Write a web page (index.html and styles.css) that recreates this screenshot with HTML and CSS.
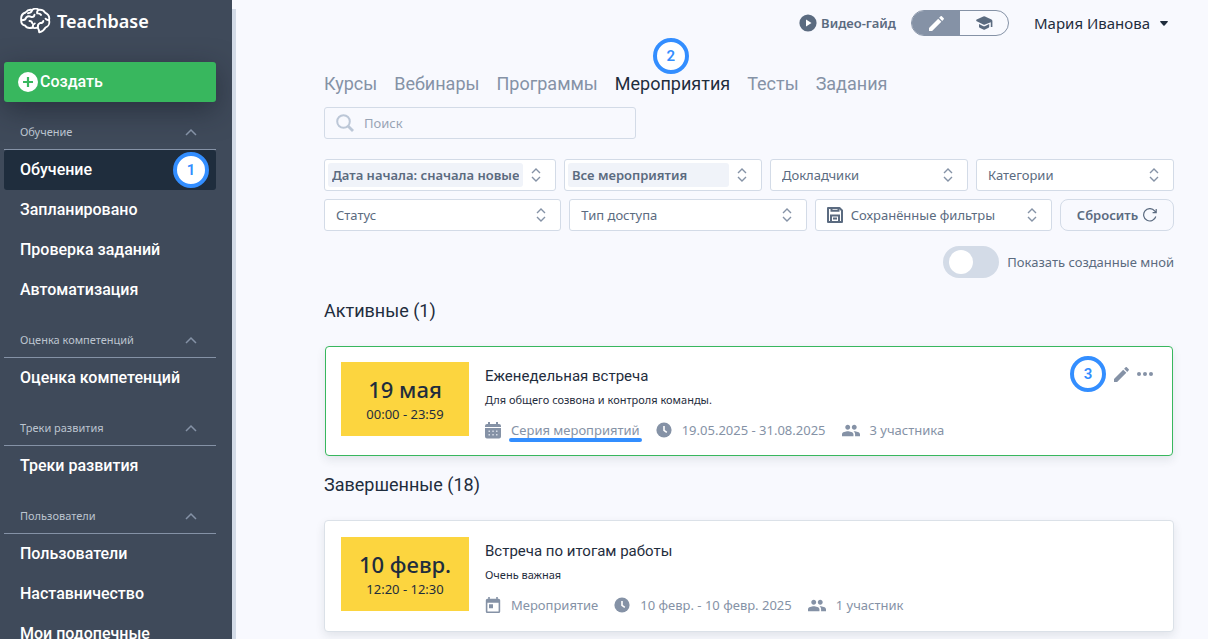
FILE: index.html
```html
<!DOCTYPE html>
<html lang="ru">
<head>
  <meta charset="UTF-8" />
  <meta name="viewport" content="width=device-width, initial-scale=1.0" />
  <title>Teachbase</title>
  <link rel="stylesheet" href="styles.css">
</head>
<body>
  <svg class="sprite" aria-hidden="true">
    <symbol id="i-up" viewBox="0 0 12 8"><path d="M1 7l5-5 5 5" fill="none" stroke="currentColor" stroke-width="1.5"/></symbol>
    <symbol id="i-sort" viewBox="0 0 10 14"><path d="M1 5l4-4 4 4M1 9l4 4 4-4" fill="none" stroke="currentColor" stroke-width="1.4"/></symbol>
    <symbol id="i-edit" viewBox="3 3 18 18"><path d="M3 17.25V21h3.75L17.81 9.94l-3.75-3.75L3 17.25zM20.71 7.04c.39-.39.39-1.02 0-1.41l-2.34-2.34c-.39-.39-1.02-.39-1.41 0l-1.83 1.83 3.75 3.75 1.83-1.83z"/></symbol>
    <symbol id="i-people" viewBox="1 3 22 18"><path d="M16 11c1.66 0 2.99-1.34 2.99-3S17.66 5 16 5c-1.66 0-3 1.34-3 3s1.34 3 3 3zm-8 0c1.66 0 2.99-1.34 2.99-3S9.66 5 8 5C6.34 5 5 6.34 5 8s1.34 3 3 3zm0 2c-2.33 0-7 1.17-7 3.5V19h14v-2.5c0-2.33-4.67-3.5-7-3.5zm8 0c-.29 0-.62.02-.97.05 1.16.84 1.97 1.97 1.97 3.45V19h6v-2.5c0-2.33-4.67-3.5-7-3.5z"/></symbol>
    <symbol id="i-clock" viewBox="0 0 16 16"><circle cx="8" cy="8" r="7.6"/><path d="M8 4v4.3l2.8 2" fill="none" stroke="#fff" stroke-width="1.6"/></symbol>
    <symbol id="i-today" viewBox="2 1 20 21"><path d="M19 3h-1V1h-2v2H8V1H6v2H5c-1.11 0-1.99.9-1.99 2L3 19c0 1.1.89 2 2 2h14c1.1 0 2-.9 2-2V5c0-1.1-.9-2-2-2zm0 16H5V8h14v11zM7 10h5v5H7z"/></symbol>
    <symbol id="i-series" viewBox="0 0 16 17"><path d="M0 5V4a2 2 0 0 1 2-2h1V0h2v2h6V0h2v2h1a2 2 0 0 1 2 2v1zM0 6h16v8.500a2 2 0 0 1-2 2H2a2 2 0 0 1-2-2z"/><path d="M3.500 8.500H5V10H3.500zM7.300 8.500h1.500V10H7.300zM11 8.500h1.500V10H11zM3.500 12H5v1.500H3.500zM7.300 12h1.500v1.500H7.300zM11 12h1.500v1.500H11z" fill="#d5dbe5"/></symbol>
  </svg>

  <aside class="sidebar">
    <a class="logo" href="#">
      <svg class="line" width="31" height="26" viewBox="0 0 31 26" stroke-width="1.9" stroke-linecap="round" stroke-linejoin="round">
        <path d="M5 17.500C2 17 1 14.500 1.200 12 .8 8.500 2.500 5.500 5.500 4.500 7.500 2 10 1.300 12 2c2-1.500 5-1.500 6.800-.2 3-.3 5.400 1 6.200 2.900 3.200 1.500 4.800 4.300 4 7.300 1 3.500-.6 6.500-3.600 7.600-1.200 2.600-3.400 4-6.200 4.700-.1-1.800-.5-3.300-1.500-4.900-2 .9-3.800.9-5 .1-3 .9-6.300.3-7.700-2z"/>
        <path d="M12 2.500c-.6 1.800-2 2.600-4 2.700M18.500 2c-1.300.8-1.700 2-1.300 3.400 1.800-.2 3 .3 3.800 1.500M1.800 12.300c2.500 0 4-1 4.400-2.800 1.400-1.300 3.200-1.500 5-.6M11.500 9c1.800.2 2.800-.8 3-2.400M13 19.300c-.6-1.800.1-3 1.800-3.800M9.500 13c1.500 0 2.500.8 2.800 2.200M28.500 12c-1.200.2-2.200-.3-3-1.300M18 19c-.4-1.800.3-3.200 2-4 1.700.2 3-.5 3.300-2"/>
      </svg>
      <span>Teachbase</span>
    </a>
    <button class="create" type="button">
      <svg width="20" height="20" viewBox="0 0 20 20"><circle cx="10" cy="10" r="10" fill="#fff"/><path d="M10 5v10M5 10h10" stroke="#38b75e" stroke-width="2.200"/></svg>
      Создать
    </button>
    <nav>
      <div class="nav-head">Обучение <svg class="up"><use href="#i-up"/></svg></div>
      <a class="nav-item active" href="#">Обучение <span class="mark mark-nav">1</span></a>
      <a class="nav-item" href="#">Запланировано</a>
      <a class="nav-item" href="#">Проверка заданий</a>
      <a class="nav-item" href="#">Автоматизация</a>
      <div class="nav-head">Оценка компетенций <svg class="up"><use href="#i-up"/></svg></div>
      <a class="nav-item" href="#">Оценка компетенций</a>
      <div class="nav-head">Треки развития <svg class="up"><use href="#i-up"/></svg></div>
      <a class="nav-item" href="#">Треки развития</a>
      <div class="nav-head">Пользователи <svg class="up"><use href="#i-up"/></svg></div>
      <a class="nav-item" href="#">Пользователи</a>
      <a class="nav-item" href="#">Наставничество</a>
      <a class="nav-item" href="#">Мои подопечные</a>
    </nav>
  </aside>
  <div class="scroll-line"></div>

  <main class="main">
    <header class="topbar">
      <a class="guide" href="#">
        <svg width="18" height="18" viewBox="0 0 18 18"><circle cx="9" cy="9" r="8.600"/><path d="M7 5.500v7l5.500-3.500z" fill="#fff"/></svg>
        Видео-гайд
      </a>
      <div class="mode">
        <button class="mode-btn on" type="button" aria-label="Редактор"><svg width="15" height="15"><use href="#i-edit"/></svg></button>
        <button class="mode-btn" type="button" aria-label="Ученик"><svg width="17" height="14" viewBox="0 0 17 14"><path d="M7.300.4a2 2 0 0 1 1.700 0l6.500 3.200q1 .6.900 1.600V11h-1.600V6.200L9 8.500a2 2 0 0 1-1.700 0L.7 5.200a.9.900 0 0 1 0-1.600zM3 8l4.500 2.200h1.300L13.200 8v2.800q0 .7-.6 1L9 13.600a2 2 0 0 1-1.700 0l-3.700-1.800q-.6-.3-.6-1z"/></svg></button>
      </div>
      <button class="user" type="button">Мария Иванова <svg width="8" height="5" viewBox="0 0 8 5"><path d="M.5 0h7q.6.300.2.900L4.600 4.600q-.6.500-1.200 0L.3.900Q0 .2.500 0z"/></svg></button>
    </header>

    <nav class="tabs">
      <a href="#">Курсы</a>
      <a href="#">Вебинары</a>
      <a href="#">Программы</a>
      <a class="current" href="#">Мероприятия<span class="mark mark-tab">2</span></a>
      <a href="#">Тесты</a>
      <a href="#">Задания</a>
    </nav>

    <label class="search">
      <svg class="line" width="18" height="18" viewBox="0 0 18 18" stroke-width="2"><circle cx="7.500" cy="7.500" r="6.300"/><path d="M12 12l5 5" stroke-width="2.800"/></svg>
      <input type="text" placeholder="Поиск" aria-label="Поиск" />
    </label>

    <div class="filters">
      <div class="filter-row first">
        <label class="filter filled"><select aria-label="Сортировка"><option>Дата начала: сначала новые</option></select><svg class="arrows"><use href="#i-sort"/></svg></label>
        <label class="filter filled"><select aria-label="Мероприятия"><option>Все мероприятия</option></select><svg class="arrows"><use href="#i-sort"/></svg></label>
        <label class="filter"><select aria-label="Докладчики"><option>Докладчики</option></select><svg class="arrows"><use href="#i-sort"/></svg></label>
        <label class="filter"><select aria-label="Категории"><option>Категории</option></select><svg class="arrows"><use href="#i-sort"/></svg></label>
      </div>
      <div class="filter-row">
        <label class="filter"><select aria-label="Статус"><option>Статус</option></select><svg class="arrows"><use href="#i-sort"/></svg></label>
        <label class="filter"><select aria-label="Тип доступа"><option>Тип доступа</option></select><svg class="arrows"><use href="#i-sort"/></svg></label>
        <label class="filter">
          <svg class="line" width="16" height="16" viewBox="0 0 16 16" stroke-width="2"><path d="M1 1h11.500L15 3.500V15H1z" stroke-linejoin="round"/><path d="M4.500 1v2.800h7V1M4 15V8.500h8V15M6 11.500h4"/></svg>
          <select aria-label="Сохранённые фильтры"><option>Сохранённые фильтры</option></select><svg class="arrows"><use href="#i-sort"/></svg>
        </label>
        <button class="reset" type="button">Сбросить <svg class="line" width="14" height="14" viewBox="0 0 14 14" stroke-width="1.200"><path d="M12.800 8.500A6.200 6.200 0 1 1 11.600 2.800l1.300 1.500M13.200 1v3.600H9.600"/></svg></button>
      </div>
    </div>

    <label class="mine"><input type="checkbox" /> Показать созданные мной</label>

    <h2>Активные (1)</h2>
    <article class="card live">
      <div class="date"><b>19 мая</b><span>00:00 - 23:59</span></div>
      <div class="info">
        <h3>Еженедельная встреча</h3>
        <p>Для общего созвона и контроля команды.</p>
        <div class="meta">
          <svg width="16" height="17"><use href="#i-series"/></svg><span class="series">Серия мероприятий</span>
          <svg width="16" height="16"><use href="#i-clock"/></svg><span>19.05.2025 - 31.08.2025</span>
          <svg width="18" height="15"><use href="#i-people"/></svg><span>3 участника</span>
        </div>
      </div>
      <div class="actions">
        <span class="mark">3</span>
        <button type="button" aria-label="Изменить"><svg width="15" height="15"><use href="#i-edit"/></svg></button>
        <button type="button" aria-label="Ещё"><svg width="16" height="4" viewBox="0 0 16 4"><circle cx="2" cy="2" r="2"/><circle cx="8" cy="2" r="2"/><circle cx="14" cy="2" r="2"/></svg></button>
      </div>
    </article>

    <h2>Завершенные (18)</h2>
    <article class="card">
      <div class="date"><b>10 февр.</b><span>12:20 - 12:30</span></div>
      <div class="info">
        <h3>Встреча по итогам работы</h3>
        <p>Очень важная</p>
        <div class="meta">
          <svg width="16" height="17"><use href="#i-today"/></svg><span>Мероприятие</span>
          <svg width="16" height="16"><use href="#i-clock"/></svg><span>10 февр. - 10 февр. 2025</span>
          <svg width="18" height="15"><use href="#i-people"/></svg><span>1 участник</span>
        </div>
      </div>
    </article>
  </main>
</body>
</html>
```
FILE: styles.css
```css
* {
  box-sizing: border-box;
}

body {
  margin: 0;
  height: 100vh;
  display: flex;
  overflow: hidden;
  background: #f8f9fe;
  color: #1f2d3d;
  font-family: "Noto Sans", "Open Sans", sans-serif;
  font-size: 13px;
  line-height: 20px;
}

a {
  color: inherit;
  text-decoration: none;
}

button,
select,
input {
  font: inherit;
  color: inherit;
}

button {
  padding: 0;
  border: 0;
  background: none;
  cursor: pointer;
}

svg {
  flex: none;
  fill: currentColor;
}

svg.line {
  fill: none;
  stroke: currentColor;
}

.sprite {
  position: absolute;
  width: 0;
  height: 0;
}

/* Sidebar */
.sidebar {
  flex: none;
  width: 232px;
  padding: 8px 16px 0 4px;
  overflow: hidden;
  background: #3f4a5a;
  color: #fff;
}

.scroll-line {
  flex: none;
  width: 4px;
  margin-top: 9px;
  background: #d3dbe7;
}

.logo {
  display: flex;
  align-items: center;
  gap: 6px;
  height: 26px;
  padding-left: 16px;
  font-size: 18px;
  font-weight: 600;
}

.create {
  display: flex;
  align-items: center;
  gap: 2px;
  width: 100%;
  height: 40px;
  margin-top: 28px;
  padding-left: 14px;
  border-radius: 3px;
  background: #38b75e;
  box-shadow: 0 8px 28px rgba(20, 26, 36, 0.5);
  font-family: Roboto, sans-serif;
  font-size: 16px;
  font-weight: 500;
}

.nav-head {
  display: flex;
  align-items: center;
  justify-content: space-between;
  height: 48px;
  padding: 12px 19px 0 16px;
  border-bottom: 1px solid #8592a6;
  color: #bcc4cf;
  font-size: 11px;
}

.up {
  width: 12px;
  height: 8px;
  color: #8592a6;
}

.nav-item {
  position: relative;
  display: flex;
  align-items: center;
  height: 40px;
  padding: 0 7px 0 16px;
  border-radius: 3px;
  font-family: Roboto, sans-serif;
  font-size: 16px;
  font-weight: 500;
}

.nav-item.active {
  background: #1f2d3d;
}

/* Numbered marks */
.mark {
  display: flex;
  align-items: center;
  justify-content: center;
  width: 36px;
  height: 36px;
  border: 4px solid #338eff;
  border-radius: 50%;
  background: #fff;
  color: #338eff;
  font-family: Roboto, sans-serif;
  font-size: 15px;
  font-weight: 600;
}

.mark-nav {
  position: absolute;
  top: 2px;
  right: 7px;
}

.mark-tab {
  position: absolute;
  left: 38px;
  bottom: 22px;
}

/* Top bar */
.main {
  flex: 1;
  min-width: 0;
  padding: 10px 34px 0 88px;
}

.topbar {
  display: flex;
  align-items: center;
  justify-content: flex-end;
  height: 26px;
  padding-right: 6px;
}

.guide {
  display: flex;
  align-items: center;
  gap: 4px;
  margin-right: 15px;
  color: #5b6b80;
  font-weight: 600;
}

.mode {
  display: flex;
  width: 98px;
  height: 26px;
  margin-right: 25px;
  overflow: hidden;
  border: 1px solid #8592a6;
  border-radius: 13px;
}

.mode-btn {
  flex: 1;
  display: flex;
  align-items: center;
  justify-content: center;
  color: #5b6b80;
}

.mode-btn.on {
  background: #8592a6;
  color: #fff;
}

.user {
  display: flex;
  align-items: center;
  gap: 10px;
  font-size: 15px;
}

/* Tabs */
.tabs {
  display: flex;
  gap: 17px;
  margin-top: 36px;
  color: #8592a6;
  font-family: Roboto, sans-serif;
  font-size: 18px;
  line-height: 24px;
}

.tabs a {
  position: relative;
}

.tabs .current {
  color: #1f2d3d;
}

/* Search and filters */
.search {
  display: flex;
  align-items: center;
  gap: 10px;
  width: 312px;
  height: 32px;
  margin-top: 11px;
  padding: 0 11px;
  border: 1px solid #d3dbe7;
  border-radius: 3px;
  color: #bcc7d7;
}

.search input {
  flex: 1;
  min-width: 0;
  padding: 0;
  border: 0;
  outline: none;
  background: none;
  color: #1f2d3d;
}

.search input::placeholder {
  color: #98a4b5;
}

.filters {
  display: flex;
  flex-direction: column;
  gap: 8px;
  margin-top: 20px;
  color: #5b6b80;
}

.filter-row {
  display: flex;
  gap: 8px;
}

.filter-row.first {
  display: grid;
  grid-template-columns: 232px repeat(3, 1fr);
}

.filter {
  flex: 1;
  display: flex;
  align-items: center;
  gap: 8px;
  min-width: 0;
  height: 32px;
  padding: 3px 14px 3px 11px;
  border: 1px solid #d3dbe7;
  border-radius: 3px;
  background: #fff;
}

.filter select {
  flex: 1;
  min-width: 0;
  height: 24px;
  padding: 0;
  border: 0;
  border-radius: 3px;
  outline: none;
  appearance: none;
  background: none;
}

.filter.filled {
  padding-left: 3px;
}

.filled select {
  padding: 0 4px;
  background: #f0f3f9;
  font-weight: 600;
}

.arrows {
  width: 10px;
  height: 14px;
  color: #8592a6;
}

.reset {
  display: flex;
  align-items: center;
  justify-content: center;
  gap: 5px;
  width: 114px;
  height: 32px;
  border: 1px solid #d3dbe7;
  border-radius: 8px;
  font-weight: 600;
}

.mine {
  display: flex;
  align-items: center;
  justify-content: flex-end;
  gap: 8px;
  margin: 15px 0 20px;
  color: #5b6b80;
}

.mine input {
  display: flex;
  align-items: center;
  width: 56px;
  height: 32px;
  margin: 0;
  padding: 0 6px;
  border-radius: 16px;
  appearance: none;
  background: #d3dbe7;
}

.mine input::before {
  content: "";
  width: 24px;
  height: 24px;
  border-radius: 50%;
  background: #fff;
}

.mine input:checked {
  justify-content: flex-end;
  background: #38b75e;
}

/* Event cards */
h2 {
  margin: 16px 0 22px;
  font-family: Roboto, sans-serif;
  font-size: 18px;
  font-weight: 400;
  line-height: 26px;
}

.card {
  display: flex;
  gap: 16px;
  padding: 16px 16px 20px;
  border: 1px solid #dbe1e8;
  border-radius: 4px;
  background: #fff;
  box-shadow: 0 4px 10px rgba(31, 45, 61, 0.1);
}

.card.live {
  margin: 0 1px;
  padding: 15px 15px 19px;
  border-color: #38b75e;
}

.date {
  flex: none;
  display: flex;
  flex-direction: column;
  align-items: center;
  justify-content: center;
  width: 128px;
  height: 74px;
  background: #fcd53f;
}

.date b {
  font-size: 22px;
  font-weight: 500;
  line-height: 30px;
}

.info {
  flex: 1;
  min-width: 0;
  height: 74px;
}

.info h3 {
  margin: 3px 0;
  font-family: Roboto, sans-serif;
  font-size: 15px;
  font-weight: 400;
  line-height: 22px;
}

.info p {
  margin: 0 0 10px;
  font-size: 11px;
  line-height: 20px;
}

.meta {
  display: flex;
  align-items: center;
  color: #8592a6;
}

.meta svg {
  margin-right: 10px;
}

.meta span {
  margin-right: 16px;
}

.series {
  position: relative;
}

.series::after {
  content: "";
  position: absolute;
  left: -2px;
  right: -2px;
  top: 18px;
  height: 4px;
  border-radius: 2px;
  background: #338eff;
}

.actions {
  display: flex;
  align-items: center;
  gap: 8px;
  height: 24px;
  margin-right: 4px;
  color: #8592a6;
}

.actions button {
  display: flex;
}
```
